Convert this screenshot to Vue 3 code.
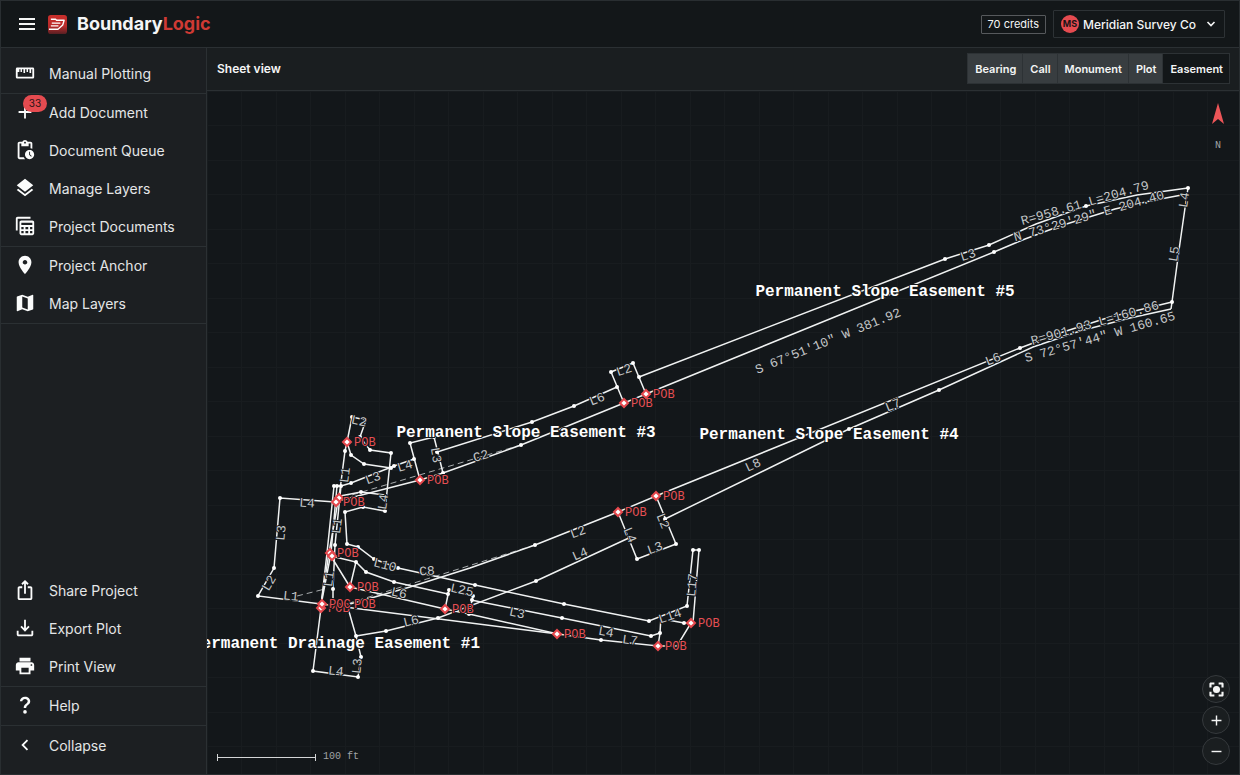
<script setup>
import { ref } from 'vue'

const icons = {
  queue: 'M17 12c-2.76 0-5 2.24-5 5s2.24 5 5 5 5-2.24 5-5-2.24-5-5-5zm1.65 7.35L16.5 17.2V14h1v2.79l1.85 1.85-.7.71zM18 3h-3.18C14.4 1.84 13.3 1 12 1s-2.4.84-2.82 2H6c-1.1 0-2 .9-2 2v15c0 1.1.9 2 2 2h6.11c-.59-.57-1.07-1.25-1.42-2H6V5h2v3h8V5h2v5.08c.71.1 1.38.31 2 .6V5c0-1.1-.9-2-2-2zm-6 2c-.55 0-1-.45-1-1s.45-1 1-1 1 .45 1 1-.45 1-1 1z',
  layers: 'M11.99 18.54l-7.37-5.73L3 14.07l9 7 9-7-1.63-1.27-7.38 5.74zM12 16l7.36-5.73L21 9l-9-7-9 7 1.63 1.27L12 16z',
  ruler: 'M3.5 6h17A1.5 1.5 0 0 1 22 7.500v9a1.500 1.500 0 0 1-1.500 1.500h-17A1.500 1.500 0 0 1 2 16.500v-9A1.500 1.500 0 0 1 3.500 6zM4 8v8h16V8h-1.300v4h-1.800V8h-1.600v3h-1.600V8h-1.600v4h-1.800V8H8.700v3H7.100V8H5.800v3H4z',
  plus: 'M19 13h-6v6h-2v-6H5v-2h6V5h2v6h6v2z',
  docs: 'M4 2h14v2H4v13H2V4c0-1.100.9-2 2-2zM8 6h12c1.100 0 2 .9 2 2v12c0 1.100-.9 2-2 2H8c-1.100 0-2-.9-2-2V8c0-1.100.9-2 2-2zM8 8.500V11h12V8.500zM8 13v2.500h2.500V13zm4.500 0v2.500h3V13zm5 0v2.500H20V13zM8 17.500V20h2.500v-2.500zm4.500 0V20h3v-2.500zm5 0V20H20v-2.500z',
  anchor: 'M12 2C8.13 2 5 5.13 5 9c0 5.25 7 13 7 13s7-7.75 7-13c0-3.87-3.13-7-7-7zm0 9.500c-1.38 0-2.500-1.12-2.500-2.500s1.12-2.500 2.500-2.500 2.500 1.12 2.500 2.500-1.12 2.500-2.500 2.500z',
  map: 'M20.5 3l-.16.03L15 5.1 9 3 3.36 4.9c-.21.07-.36.25-.36.48V20.5c0 .28.22.5.5.5l.16-.03L9 18.9l6 2.1 5.64-1.9c.21-.07.36-.25.36-.48V3.5c0-.28-.22-.5-.5-.5zM15 19l-6-2.11V5l6 2.11V19z',
  share: 'M16 5l-1.42 1.42-1.59-1.59V16h-1.98V4.83L9.42 6.42 8 5l4-4 4 4zm4 5v11c0 1.1-.9 2-2 2H6c-1.11 0-2-.9-2-2V10c0-1.11.89-2 2-2h3v2H6v11h12V10h-3V8h3c1.1 0 2 .89 2 2z',
  export: 'M3 15h2v4h14v-4h2v4c0 1.100-.9 2-2 2H5c-1.100 0-2-.9-2-2zM11 3h2v9.170l2.590-2.580L17 11l-5 5-5-5 1.410-1.410L11 12.170z',
  print: 'M19 8H5c-1.66 0-3 1.34-3 3v6h4v4h12v-4h4v-6c0-1.66-1.34-3-3-3zm-3 11H8v-5h8v5zm3-7c-.55 0-1-.45-1-1s.45-1 1-1 1 .45 1 1-.45 1-1 1zm-1-9H6v4h12V3z',
  help: 'M12 3c-3 0-5.400 2-5.600 5h2.700c.2-1.500 1.300-2.500 2.900-2.500 1.700 0 2.900 1 2.900 2.500 0 2.700-4.300 2.900-4.300 7.200h2.700c0-3 4.400-3.500 4.400-7.300C17.700 5 15.300 3 12 3zm0 14.500a2 2 0 1 0 0 4 2 2 0 0 0 0-4z',
  collapse: 'M15.410 7.410 14 6l-6 6 6 6 1.410-1.410L10.830 12z',
  focus: 'M12 7a5 5 0 1 0 0 10 5 5 0 0 0 0-10zM5 15H2v5c0 1.1.9 2 2 2h5v-3H5v-4zM5 5h4V2H4c-1.1 0-2 .9-2 2v5h3V5zm15-3h-5v3h4v4h3V4c0-1.1-.9-2-2-2zm-1 17h-4v3h5c1.1 0 2-.9 2-2v-5h-3v4z',
  minus: 'M19 13H5v-2h14z'
}

const topGroups = [
  [{ icon: 'ruler', label: 'Manual Plotting' }],
  [
    { icon: 'plus', label: 'Add Document', badge: 33 },
    { icon: 'queue', label: 'Document Queue' },
    { icon: 'layers', label: 'Manage Layers' },
    { icon: 'docs', label: 'Project Documents' }
  ],
  [
    { icon: 'anchor', label: 'Project Anchor' },
    { icon: 'map', label: 'Map Layers' }
  ]
]
const bottomGroups = [
  [
    { icon: 'share', label: 'Share Project' },
    { icon: 'export', label: 'Export Plot' },
    { icon: 'print', label: 'Print View' }
  ],
  [{ icon: 'help', label: 'Help' }],
  [{ icon: 'collapse', label: 'Collapse' }]
]

const tabs = ['Bearing', 'Call', 'Monument', 'Plot', 'Easement']
const active = ref('Easement')

const lines = [
  '639,377 945,259 989,245 1036,224 1086,206 1137,195 1188,188',
  '624,403 646,394 994,252 1025,239 1060,226 1115,209 1150,201 1187,194',
  '1188,188 1185,208 1179,250 1172,302 1171,309',
  '656,496 1020,348 1060,333 1110,317 1172,302',
  '665,519 849,429 939,390 1033,347 1080,331 1130,318 1171,309',
  '624,403 611,372 633,363 646,394',
  '617,387 574,406 532,422 437,452',
  '624,403 521,445 443,473 420,480 342,500',
  '420,480 410,443 434,437 443,473',
  '414,459 394,466 351,483 341,486 334,486',
  '618,512 637,559 676,544 656,496 618,512 535,545 470,568 410,587 350,604',
  '631,537 536,581 438,618 386,631 356,636',
  '348,608 356,636 361,657 358,677 313,671 321,608',
  '335,502 280,498 274,568 258,596 321,604 558,634',
  '352,417 347,442 345,451 340,490 329,553 321,604',
  '352,417 366,420 360,437 370,450 391,453 385,511 363,507 345,512 347,544 358,547 374,559 398,568 475,585 564,604 649,621 687,606 693,550 699,550 693,623',
  '347,442 351,455 364,464 391,468',
  '334,486 327,553 321,606',
  '337,486 331,553 322,600',
  '341,486 335,545 333,589 333,600',
  '340,496 361,492 385,495',
  '331,556 356,562 350,587 329,553',
  '356,562 366,572 394,582 448,594',
  '350,587 445,609 469,614 558,634 601,640 658,646 660,633 661,616',
  '445,609 449,590 473,596 469,614',
  '471,600 562,618 651,636 660,633',
  '658,646 677,646 691,623 684,623 668,620'
]
const dashes = ['521,445 345,497', '535,545 430,578 340,606', '297,596 325,589']
const dots = [
  [945,259],[989,245],[1086,206],[1188,188],[994,252],[1172,302],[1020,348],[939,390],[849,429],[665,519],
  [611,372],[633,363],[639,377],[617,387],[574,406],[532,422],[521,445],[443,473],[437,452],[410,443],[434,437],[414,459],
  [394,466],[391,468],[391,453],[370,450],[360,437],[352,417],[345,451],[351,455],[364,464],[351,483],[334,486],[337,486],[341,486],
  [385,511],[363,507],[345,512],[347,544],[358,547],[374,559],[398,568],[475,585],[564,604],[649,621],[687,606],[693,550],[699,550],
  [361,492],[335,545],[333,589],[356,562],[366,572],[394,582],[449,590],[448,594],[473,596],[472,600],[469,614],[562,618],
  [601,640],[651,636],[660,633],[684,623],[637,559],[676,544],[535,545],[536,581],[438,618],[386,631],[356,636],[361,657],[358,677],
  [313,671],[280,498],[274,568],[258,596]
]
const pobs = [
  [347,442],[339,498,''],[336,502],[330,553],[332,556,''],[350,587],[321,608],[322,604,'POC'],[347,604,'POB',true],[445,609],
  [557,634],[658,646],[691,623],[420,480],[624,403],[646,394],[618,512],[656,496]
]
const labels = [
  ['R=958.61 L=204.79', 1085, 203, -16], ['N 73°29\'29" E 204.40', 1089, 216, -16],
  ['R=901.93 L=160.86', 1095, 323, -16], ['S 72°57\'44" W 160.65', 1100, 337, -16],
  ['S 67°51\'10" W 381.92', 828, 341, -22],
  ['L3', 968, 255, -18], ['L4', 1184, 200, -82], ['L5', 1174, 254, -82], ['L6', 993, 359, -22],
  ['L7', 893, 405, -22], ['L8', 753, 465, -25], ['L2', 624, 370, -18], ['L6', 597, 399, -22],
  ['C2', 481, 456, -16], ['L3', 436, 455, 80], ['L4', 405, 466, -16], ['L3', 373, 478, -20],
  ['L2', 359, 421, 12], ['L1', 345, 475, -83], ['L4', 383, 502, -82], ['L4', 307, 503, 4],
  ['L3', 281, 533, -85], ['L2', 269, 583, -60], ['L1', 291, 596, 6], ['L1', 337, 526, -83],
  ['L1', 329, 579, -83], ['L10', 385, 565, 14], ['C8', 427, 571, -4], ['L6', 399, 593, 12],
  ['L25', 462, 590, 12], ['L3', 517, 613, 12], ['L4', 606, 632, 10], ['L7', 630, 640, 8],
  ['L14', 670, 616, -18], ['L17', 692, 585, -85], ['L6', 411, 621, -14], ['L4', 580, 554, -24],
  ['L2', 578, 532, -20], ['L4', 630, 535, 68], ['L2', 663, 521, 68], ['L3', 655, 548, -20],
  ['L4', 336, 671, 6], ['L3', 357, 666, -84]
]
const titles = [
  ['Permanent Slope Easement #5', 885, 296], ['Permanent Slope Easement #3', 526, 437],
  ['Permanent Slope Easement #4', 829, 439], ['Permanent Drainage Easement #1', 336, 648]
]
</script>

<template>
  <div class="app">
    <header class="header">
      <button class="menu" aria-label="Menu"><i></i><i></i><i></i></button>
      <a class="brand" href="#">
        <svg class="logo" viewBox="0 0 20 20" aria-hidden="true">
          <defs>
            <linearGradient id="logo-fill" x1="0" y1="0" x2="0" y2="1">
              <stop offset="0" stop-color="#c92f2b" /><stop offset=".6" stop-color="#b92b2b" /><stop offset="1" stop-color="#571f23" />
            </linearGradient>
          </defs>
          <rect width="20" height="20" rx="3" fill="url(#logo-fill)" />
          <path d="M3 4.500h5l1 1h8l-1.500 5-5 4.500H1M4 8.500h9M3 11.500h8" fill="none" stroke="#fff" stroke-width="1.400" stroke-linejoin="round" />
        </svg>
        <span class="wordmark">Boundary<b>Logic</b></span>
      </a>
      <span class="credits">70 credits</span>
      <button class="account">
        <span class="avatar">MS</span>
        <span>Meridian Survey Co</span>
        <svg class="chevron" viewBox="0 0 10 10" aria-hidden="true"><path d="M1.500 3 5 6.500 8.500 3" fill="none" stroke="currentColor" stroke-width="1.600" /></svg>
      </button>
    </header>

    <div class="body">
      <nav class="sidebar">
        <div v-for="(group, g) in topGroups" :key="g" class="group">
          <button v-for="item in group" :key="item.label" class="item">
            <svg viewBox="0 0 24 24" aria-hidden="true"><path :d="icons[item.icon]" fill-rule="evenodd" /></svg>
            <span v-if="item.badge" class="badge">{{ item.badge }}</span>
            <span>{{ item.label }}</span>
          </button>
        </div>
        <div class="spacer"></div>
        <div v-for="(group, g) in bottomGroups" :key="'b' + g" class="group">
          <button v-for="item in group" :key="item.label" class="item">
            <svg viewBox="0 0 24 24" aria-hidden="true"><path :d="icons[item.icon]" fill-rule="evenodd" /></svg>
            <span>{{ item.label }}</span>
          </button>
        </div>
      </nav>

      <main class="main">
        <div class="toolbar">
          <h1>Sheet view</h1>
          <div class="tabs">
            <button v-for="t in tabs" :key="t" :class="{ active: t === active }" @click="active = t">{{ t }}</button>
          </div>
        </div>

        <div class="canvas">
          <svg class="plot" viewBox="207 91 1032 683" preserveAspectRatio="xMinYMin meet" role="img" aria-label="Easement plot">
            <polyline v-for="(l, i) in dashes" :key="'d' + i" :points="l" class="line dashed" />
            <polyline v-for="(l, i) in lines" :key="'l' + i" :points="l" class="line" />
            <circle v-for="(d, i) in dots" :key="'p' + i" :cx="d[0]" :cy="d[1]" r="2" class="dot" />
            <text v-for="(l, i) in labels" :key="'t' + i" class="label" dy="4" :transform="`translate(${l[1]} ${l[2]}) rotate(${l[3]})`">{{ l[0] }}</text>
            <g v-for="(p, i) in pobs" :key="'b' + i" :transform="`translate(${p[0]} ${p[1]})`">
              <text v-if="p[2] !== ''" class="pob" x="7" y="4">{{ p[2] ?? 'POB' }}</text>
              <path v-if="!p[3]" class="marker" d="M0-4 4 0 0 4-4 0z" />
            </g>
            <text v-for="t in titles" :key="t[0]" class="title" :x="t[1]" :y="t[2]">{{ t[0] }}</text>
          </svg>

          <div class="north">
            <svg viewBox="0 0 12 22" aria-hidden="true"><path d="M6 0 12 21 6 16 0 21z" fill="#ec5558" /></svg>
            <span>N</span>
          </div>
          <div class="scale"><i></i><span>100 ft</span></div>
          <div class="zoom">
            <button aria-label="Fit to view"><svg viewBox="0 0 24 24"><path :d="icons.focus" /></svg></button>
            <button aria-label="Zoom in"><svg viewBox="0 0 24 24"><path :d="icons.plus" /></svg></button>
            <button aria-label="Zoom out"><svg viewBox="0 0 24 24"><path :d="icons.minus" /></svg></button>
          </div>
        </div>
      </main>
    </div>
  </div>
</template>

<style>
body { background: #131719; }
</style>

<style scoped>
.app {
  box-sizing: border-box;
  min-height: 100vh;
  display: flex;
  flex-direction: column;
  border: 1px solid #292e31;
  background: #131719;
  color: #f4f5f5;
  font-family: Inter, "Liberation Sans", sans-serif;
}
.app * { box-sizing: border-box; }
button { font: inherit; color: inherit; background: none; border: 0; padding: 0; margin: 0; }
svg { fill: currentColor; flex: none; }

.header {
  display: flex;
  align-items: center;
  height: 47px;
  padding: 0 14px 0 18px;
  border-bottom: 1px solid #2b3033;
}
.menu { display: flex; flex-direction: column; gap: 3px; width: 16px; }
.menu i { height: 2px; background: #f4f5f5; }
.brand { display: flex; align-items: center; gap: 10px; margin: 0 auto 0 13px; color: inherit; text-decoration: none; }
.logo { width: 19px; height: 19px; }
.wordmark { font-size: 18px; font-weight: 700; line-height: 24px; }
.wordmark b { font-weight: 700; color: #cf3a34; }
.credits {
  padding: 0 6px;
  border: 1px solid #56595c;
  border-radius: 1px;
  font-size: 11px;
  line-height: 17px;
}
.account {
  display: flex;
  align-items: center;
  gap: 4px;
  width: 172px;
  height: 28px;
  margin-left: 7px;
  padding: 0 8px 0 7px;
  border: 1px solid #2d3235;
  border-radius: 1px;
  font-size: 12px;
  font-weight: 500;
  white-space: nowrap;
}
.avatar {
  width: 18px;
  border-radius: 50%;
  background: #e54b50;
  color: #1b1416;
  font-size: 9px;
  font-weight: 700;
  line-height: 18px;
  text-align: center;
}
.chevron { width: 10px; height: 10px; margin-left: auto; }

.body { flex: 1; display: flex; }
.sidebar {
  display: flex;
  flex-direction: column;
  width: 206px;
  padding: 7px 0 8px;
  background: #1c1f22;
  border-right: 1px solid #2b3033;
}
.group + .group { border-top: 1px solid #2b3033; }
.spacer { flex: 1; border-top: 1px solid #2b3033; }
.item {
  position: relative;
  display: flex;
  align-items: center;
  gap: 13px;
  width: 100%;
  height: 38px;
  padding: 0 0 2px 13px;
  font-size: 14px;
  color: #e4e6e7;
  text-align: left;
}
.item svg { width: 22px; height: 22px; color: #fbfcfc; }
.sidebar .group:last-child .item { height: 40px; }
.badge {
  position: absolute;
  left: 22px;
  top: 1px;
  width: 24px;
  border-radius: 9px;
  background: #e54b50;
  color: #2a1416;
  font-size: 10px;
  line-height: 17px;
  text-align: center;
}

.main { flex: 1; min-width: 0; display: flex; flex-direction: column; }
.toolbar {
  display: flex;
  align-items: center;
  justify-content: space-between;
  height: 43px;
  padding: 0 9px 1px 10px;
  background: #1a1e20;
  border-bottom: 1px solid #2b3033;
}
h1 { margin: 0; font-size: 12px; line-height: 16px; font-weight: 600; }
.tabs { display: flex; border: 1px solid #2d3235; }
.tabs button {
  height: 29px;
  padding: 0 6px 0 7px;
  border-right: 1px solid #2d3235;
  background: #383d40;
  font-size: 11px;
  font-weight: 600;
}
.tabs button.active { background: #131719; border-right: 0; }

.canvas {
  position: relative;
  flex: 1;
  overflow: hidden;
  background-color: #13171a;
  background-image:
    linear-gradient(90deg, #181c1f 1px, transparent 1px, transparent 34px, #181c1f 34px, #181c1f 35px, transparent 35px),
    linear-gradient(#181c1f 1px, transparent 1px, transparent 34px, #181c1f 34px, #181c1f 35px, transparent 35px);
  background-size: 69px 69px;
}
.plot { position: absolute; inset: 0; width: 100%; height: 100%; }
.line { fill: none; stroke: #f0f2f2; stroke-width: 1.5; }
.dashed { stroke: #a9adaf; stroke-width: 1; stroke-dasharray: 6 4; }
.dot { fill: #fff; }
text { font-family: "Liberation Mono", monospace; stroke: #13171a; stroke-width: 2; paint-order: stroke; }
.label { font-size: 13px; text-anchor: middle; fill: #c3c6c8; }
.pob { font-size: 12px; fill: #e54f54; }
.marker { fill: #fff; stroke: #e5474c; stroke-width: 2; }
.title { font-size: 16px; font-weight: 700; text-anchor: middle; fill: #fff; }

.north {
  position: absolute;
  top: 12px;
  right: 15px;
  display: flex;
  flex-direction: column;
  align-items: center;
  gap: 15px;
  color: #a0a4a6;
  font: 10px/12px "Liberation Mono", monospace;
}
.north svg { width: 12px; height: 22px; }
.scale {
  position: absolute;
  left: 10px;
  bottom: 11px;
  display: flex;
  align-items: center;
  gap: 7px;
  color: #a0a4a6;
  font: 10px/12px "Liberation Mono", monospace;
}
.scale i { display: flex; align-items: center; width: 99px; height: 7px; border: solid #d4d6d7; border-width: 0 1px; }
.scale i::before { content: ""; width: 100%; height: 1px; background: #d4d6d7; }
.zoom { position: absolute; right: 9px; bottom: 9px; display: flex; flex-direction: column; gap: 3px; }
.zoom button {
  display: flex;
  align-items: center;
  justify-content: center;
  width: 28px;
  height: 28px;
  border: 1px solid #35393c;
  border-radius: 50%;
  background: #1a1e20;
}
.zoom svg { width: 17px; height: 17px; }
</style>
